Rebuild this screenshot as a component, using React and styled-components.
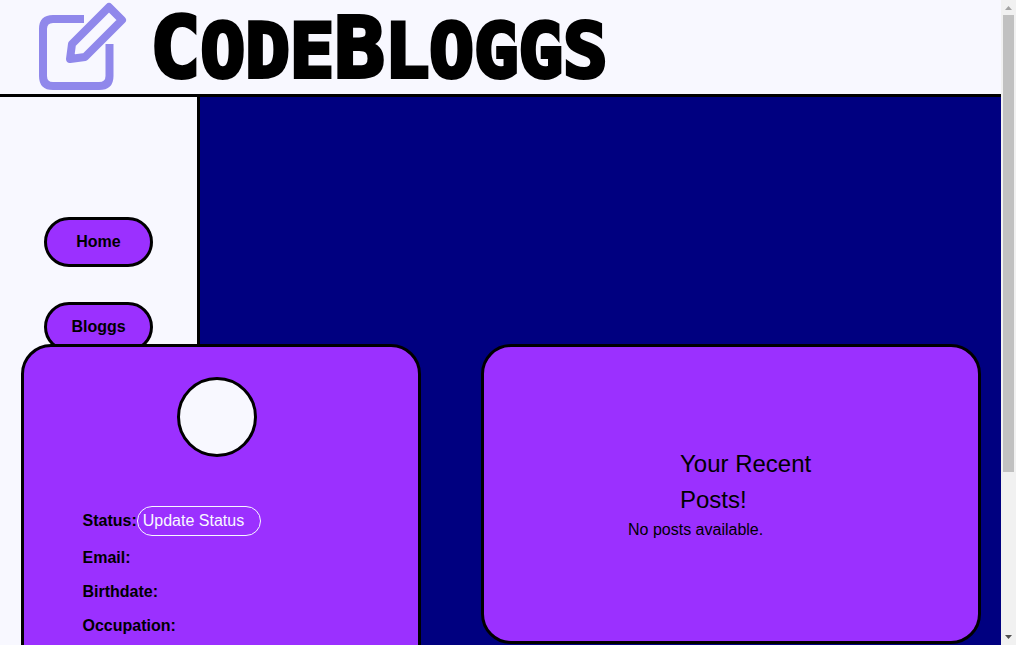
import React from "react";
import styled, { createGlobalStyle } from "styled-components";

const ghost = "#f8f8ff";
const navy = "#000080";
const purple = "#9b30ff";

const GlobalStyle = createGlobalStyle`
  *, *::before, *::after { box-sizing: border-box; }
  body {
    margin: 0;
    background: ${navy};
    color: #000;
    font: 16px/24px "Liberation Sans", Arial, sans-serif;
  }
`;

const Shell = styled.div`
  display: grid;
  grid-template-columns: minmax(0, 1fr) 15px;
  height: 100vh;
`;

const Page = styled.div`
  display: flex;
  flex-direction: column;
  min-height: 0;
`;

const Header = styled.header`
  display: flex;
  align-items: center;
  gap: 22px;
  flex: none;
  height: 97px;
  padding-left: 37px;
  background: ${ghost};
  border-bottom: 3px solid #000;
`;

const LogoMark = styled.svg`
  flex: none;
  width: 91px;
  height: 94px;
`;

const Wordmark = styled.h1`
  margin: 0;
  padding-top: 4px;
  font-family: "DejaVu Sans Mono", monospace;
  font-size: 74px;
  line-height: 88px;
  font-weight: 700;
  text-transform: uppercase;
  white-space: nowrap;
  -webkit-text-stroke: 4px #000;
`;

const Initial = styled.span`
  font-size: 84px;
`;

const Body = styled.div`
  display: grid;
  grid-template-columns: 200px minmax(0, 1fr);
  grid-template-rows: minmax(0, 1fr);
  flex: 1;
  min-height: 0;
  overflow: hidden;
`;

const Sidebar = styled.nav`
  grid-area: 1 / 1;
  display: flex;
  flex-direction: column;
  align-items: center;
  gap: 35px;
  padding-top: 120px;
  background: ${ghost};
  border-right: 3px solid #000;
`;

const NavButton = styled.button`
  width: 109px;
  height: 50px;
  padding: 0;
  border: 3px solid #000;
  border-radius: 25px;
  background: ${purple};
  color: #000;
  font: inherit;
  font-weight: 700;
  cursor: pointer;
`;

const Cards = styled.main`
  grid-area: 1 / 1 / 2 / 3;
  display: flex;
  justify-content: center;
  align-items: flex-start;
  gap: 60px;
  padding-top: 247px;
  pointer-events: none;
`;

const Card = styled.section`
  flex: 0 1 ${(p) => p.$width};
  border: 3px solid #000;
  border-radius: 30px;
  background: ${purple};
  pointer-events: auto;
`;

const ProfileCard = styled(Card)`
  display: flex;
  flex-direction: column;
  gap: 10px;
  min-height: 500px;
  padding: 30px 67px 30px 59px;
`;

const Avatar = styled.div`
  align-self: center;
  width: 80px;
  height: 80px;
  margin-bottom: 39px;
  border: 3px solid #000;
  border-radius: 50%;
  background: ${ghost};
`;

const Field = styled.div`
  display: flex;
  align-items: center;
  font-weight: 700;
`;

const StatusInput = styled.input`
  width: 124px;
  height: 30px;
  padding: 0 5px;
  border: 1px solid ${ghost};
  border-radius: 15px;
  background: transparent;
  color: ${ghost};
  font: inherit;
  font-weight: 400;

  &::placeholder { color: ${ghost}; opacity: 1; }
`;

const PostsCard = styled(Card)`
  display: flex;
  justify-content: center;
  align-items: center;
  height: 300px;
`;

const Posts = styled.div`
  width: 205px;
`;

const PostsTitle = styled.h2`
  margin: 0 0 0 52px;
  font-size: 24px;
  line-height: 36px;
  font-weight: 400;
`;

const Empty = styled.p`
  margin: 0;
`;

const ScrollTrack = styled.div`
  display: flex;
  flex-direction: column;
  align-items: center;
  background: #f1f1f1;
`;

const ScrollArrow = styled.svg`
  flex: none;
  width: 15px;
  height: 15px;
`;

const ScrollRail = styled.div`
  flex: 1;
  width: 11px;
`;

const ScrollThumb = styled.div`
  height: 74.3%;
  background: #c1c1c1;
`;

export default function App() {
  return (
    <>
      <GlobalStyle />
      <Shell>
        <Page>
          <Header>
            <LogoMark viewBox="0 0 91 94" fill="none" stroke="#9088eb" strokeLinejoin="round" aria-hidden="true">
              <path strokeWidth="8" d="M47 19H16Q6 19 6 29V76Q6 86 16 86H62Q72.500 86 72.500 76V44" />
              <path strokeWidth="8" d="M72 7 L85 20 L48 57 L33 59 L35 44 Z" />
            </LogoMark>
            <Wordmark><Initial>C</Initial>ode<Initial>B</Initial>loggs</Wordmark>
          </Header>
          <Body>
            <Sidebar>
              <NavButton type="button">Home</NavButton>
              <NavButton type="button">Bloggs</NavButton>
            </Sidebar>
            <Cards>
              <ProfileCard $width="400px">
                <Avatar />
                <Field>
                  <label htmlFor="status">Status:</label>
                  <StatusInput id="status" placeholder="Update Status" />
                </Field>
                <Field>Email:</Field>
                <Field>Birthdate:</Field>
                <Field>Occupation:</Field>
              </ProfileCard>
              <PostsCard $width="500px">
                <Posts>
                  <PostsTitle>Your Recent Posts!</PostsTitle>
                  <Empty>No posts available.</Empty>
                </Posts>
              </PostsCard>
            </Cards>
          </Body>
        </Page>
        <ScrollTrack aria-hidden="true">
          <ScrollArrow viewBox="0 0 15 15"><path d="M4 10 L7.500 6 L11 10Z" fill="#a3a3a3" /></ScrollArrow>
          <ScrollRail><ScrollThumb /></ScrollRail>
          <ScrollArrow viewBox="0 0 15 15"><path d="M4 5 L7.500 9 L11 5Z" fill="#505050" /></ScrollArrow>
        </ScrollTrack>
      </Shell>
    </>
  );
}
